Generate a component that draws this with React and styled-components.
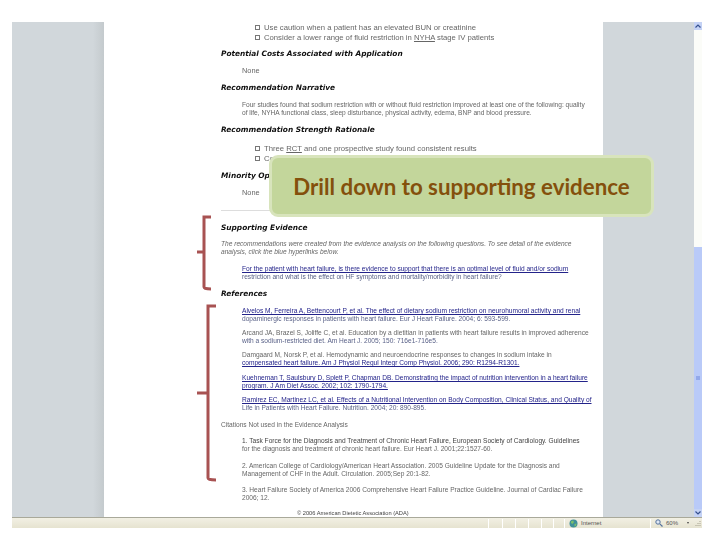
import React from "react";
import styled, { createGlobalStyle } from "styled-components";

const Global = createGlobalStyle`
  html, body { margin: 0; background: #fff; }
  body { width: 720px; height: 540px; overflow: hidden; font-family: "Liberation Sans", Arial, sans-serif; }
`;
const Stage = styled.div`
  position: relative; width: 720px; height: 540px; box-sizing: border-box; padding: 22px 18px 12px 12px;
`;
const Browser = styled.div`
  display: flex; flex-direction: column; height: 506px;
`;
const Viewport = styled.div`
  display: flex; height: 495px;
`;
const LeftMargin = styled.div`
  width: 92px; background: linear-gradient(90deg, #d1d7db 0, #d1d7db 88%, #c4cacd 100%);
`;
const RightMargin = styled.div`
  width: 91px; background: #d1d7db;
`;
const Doc = styled.main`
  width: 499px; box-sizing: border-box; background: #fff; padding: 1px 0 0 117px; overflow: hidden;
  filter: blur(0.4px); color: #555;
`;
const Heading = styled.h3`
  margin: ${p => p.$top}px 0 0; font: italic bold 7.4px/10px "DejaVu Sans", sans-serif; color: #111; white-space: nowrap;
`;
const Body = styled.div`
  margin: ${p => p.$top || 0}px 0 0 ${p => p.$indent ?? 21}px;
  font-size: ${p => p.$size || 6.6}px; line-height: 8px; white-space: nowrap; color: #666;
  font-style: ${p => p.$italic ? "italic" : "normal"};
`;
const Item = styled.div`
  display: flex; align-items: center; gap: 4px; height: 8px;
  margin: ${p => p.$top || 0}px 0 0 34px;
  font-size: 7.7px; white-space: nowrap; color: #666;
`;
const Box = styled.span`
  width: 5px; height: 5px; border: 1px solid #777; box-sizing: border-box;
`;
const Rule = styled.hr`
  margin: 13px 0 0; height: 1px; width: 370px; border: 0; background: #ddd;
`;
const Line = styled.div`
  color: ${p => p.$link ? "#23238a" : p.$blue ? "#5a6288" : p.$dark ? "#444" : "#666"};
  text-decoration: ${p => p.$link ? "underline" : "none"};
`;
const Foot = styled.div`
  margin: 7px 0 0 76px; font-size: 5.7px; line-height: 8px; color: #444; white-space: nowrap;
`;

const Scroll = styled.div`
  width: 8px; display: flex; flex-direction: column; background: #fbfcf8;
`;
const ScrollBtn = styled.div`
  height: 8px; background: #c4d2f5; display: flex; align-items: center; justify-content: center;
`;
const Track = styled.div`
  flex: 1; display: flex; flex-direction: column;
`;
const TrackGap = styled.div`
  height: 217px;
`;
const Thumb = styled.div`
  flex: 1; background: #b9caf8; display: flex; align-items: center; justify-content: center;
`;
const Grip = styled.span`
  width: 4px; height: 4px; background: #93a9ea;
`;
const Status = styled.footer`
  height: 11px; display: flex; align-items: center; box-sizing: border-box;
  border-top: 1px solid #a9a99a; background: linear-gradient(#f2f0e4, #e6e3d0);
  font-size: 6px; color: #555;
`;
const Spacer = styled.div`
  width: 476px;
`;
const Cell = styled.div`
  width: ${p => p.$w}px; height: 9px; box-sizing: border-box; border-left: 1px solid #fff;
  display: flex; align-items: center; gap: ${p => p.$gap || 0}px; padding-left: ${p => p.$pad || 0}px; white-space: nowrap;
`;
const Caret = styled.span`
  margin-left: 6px; width: 0; height: 0; border: 1.5px solid transparent; border-top: 2px solid #444; border-bottom: 0;
`;
const Resize = styled.svg`
  margin-left: 3px;
`;

const Brackets = styled.svg`
  position: absolute; left: 190px; top: 210px;
`;
const Callout = styled.div`
  position: absolute; left: 269px; top: 155px; width: 385px; height: 62px; box-sizing: border-box;
  display: flex; align-items: center; justify-content: center;
  background: #c3d69b; border: 3px solid #d8e4bc; border-radius: 9px;
  color: #84500c; font: bold 22.3px "Lato", sans-serif; white-space: nowrap;
`;

const refs = [
  [["Alvelos M, Ferreira A, Bettencourt P, et al. The effect of dietary sodium restriction on neurohumoral activity and renal", "link"], ["dopaminergic responses in patients with heart failure. Eur J Heart Failure. 2004; 6: 593-599.", "blue"]],
  [["Arcand JA, Brazel S, Joliffe C, et al. Education by a dietitian in patients with heart failure results in improved adherence", ""], ["with a sodium-restricted diet. Am Heart J. 2005; 150: 716e1-716e5.", "blue"]],
  [["Damgaard M, Norsk P, et al. Hemodynamic and neuroendocrine responses to changes in sodium intake in", ""], ["compensated heart failure. Am J Physiol Regul Integr Comp Physiol. 2006; 290: R1294-R1301.", "link"]],
  [["Kuehneman T, Saulsbury D, Splett P, Chapman DB. Demonstrating the impact of nutrition intervention in a heart failure", "link"], ["program. J Am Diet Assoc. 2002; 102: 1790-1794.", "link"]],
  [["Ramirez EC, Martinez LC, et al. Effects of a Nutritional Intervention on Body Composition, Clinical Status, and Quality of", "link"], ["Life in Patients with Heart Failure. Nutrition. 2004; 20: 890-895.", "blue"]],
];
const refTops = [8, 6, 6, 7, 6];

const notes = [
  [8, ["1. Task Force for the Diagnosis and Treatment of Chronic Heart Failure, European Society of Cardiology. Guidelines", "for the diagnosis and treatment of chronic heart failure. Eur Heart J. 2001;22:1527-60."]],
  [9, ["2. American College of Cardiology/American Heart Association. 2005 Guideline Update for the Diagnosis and", "Management of CHF in the Adult. Circulation. 2005;Sep 20:1-82."]],
  [8, ["3. Heart Failure Society of America 2006 Comprehensive Heart Failure Practice Guideline. Journal of Cardiac Failure", "2006; 12."]],
];

const Globe = () => (
  <svg width="9" height="9" viewBox="0 0 9 9">
    <circle cx="4.5" cy="4.5" r="4" fill="#3f8f9a" />
    <path d="M2 2.5 4 1.5 5 3 3.5 5 2 4zM5.5 5 7.5 4.5 7 7 5.5 7.5z" fill="#7cc06a" />
  </svg>
);
const Zoom = () => (
  <svg width="8" height="8" viewBox="0 0 8 8">
    <circle cx="3" cy="3" r="2.2" fill="#dfe8f5" stroke="#55729c" />
    <path d="M4.8 4.8 7.5 7.5" stroke="#55729c" strokeWidth="1.2" />
  </svg>
);

export default function App() {
  return (
    <Stage>
      <Global />
      <Browser>
        <Viewport>
          <LeftMargin />
          <Doc>
            <Item><Box /><span>Use caution when a patient has an elevated BUN or creatinine</span></Item>
            <Item $top={2}><Box /><span>Consider a lower range of fluid restriction in <u>NYHA</u> stage IV patients</span></Item>
            <Heading $top={8}>Potential Costs Associated with Application</Heading>
            <Body $top={8} $size={7.4}>None</Body>
            <Heading $top={8}>Recommendation Narrative</Heading>
            <Body $top={8}>
              <Line>Four studies found that sodium restriction with or without fluid restriction improved at least one of the following: quality</Line>
              <Line>of life, NYHA functional class, sleep disturbance, physical activity, edema, BNP and blood pressure.</Line>
            </Body>
            <Heading $top={8}>Recommendation Strength Rationale</Heading>
            <Item $top={9}><Box /><span>Three <u>RCT</u> and one prospective study found consistent results</span></Item>
            <Item $top={2}><Box /><span>Consistent</span></Item>
            <Heading $top={9}>Minority Opinions</Heading>
            <Body $top={8} $size={7.4}>None</Body>
            <Rule />
            <Heading $top={12}>Supporting Evidence</Heading>
            <Body $top={7} $indent={0} $italic>
              <Line>The recommendations were created from the evidence analysis on the following questions. To see detail of the evidence</Line>
              <Line>analysis, click the blue hyperlinks below.</Line>
            </Body>
            <Body $top={9}>
              <Line $link>For the patient with heart failure, is there evidence to support that there is an optimal level of fluid and/or sodium</Line>
              <Line $blue>restriction and what is the effect on HF symptoms and mortality/morbidity in heart failure?</Line>
            </Body>
            <Heading $top={8}>References</Heading>
            {refs.map((r, i) => (
              <Body key={i} $top={refTops[i]}>
                {r.map(([t, k]) => <Line key={t} $link={k === "link"} $blue={k === "blue"}>{t}</Line>)}
              </Body>
            ))}
            <Body $top={9} $indent={0}>Citations Not used in the Evidence Analysis</Body>
            {notes.map(([top, ls], n) => (
              <Body key={ls[0]} $top={top}>
                {ls.map((t, j) => <Line key={t} $dark={n === 0 && j === 0}>{t}</Line>)}
              </Body>
            ))}
            <Foot>© 2006 American Dietetic Association (ADA)</Foot>
          </Doc>
          <RightMargin />
          <Scroll>
            <ScrollBtn>
              <svg width="6" height="4" viewBox="0 0 6 4"><path d="M0.5 3.5 3 1 5.5 3.5" fill="none" stroke="#35508f" strokeWidth="1.2" /></svg>
            </ScrollBtn>
            <Track>
              <TrackGap />
              <Thumb><Grip /></Thumb>
            </Track>
            <ScrollBtn>
              <svg width="6" height="4" viewBox="0 0 6 4"><path d="M0.5 0.5 3 3 5.5 0.5" fill="none" stroke="#35508f" strokeWidth="1.2" /></svg>
            </ScrollBtn>
          </Scroll>
        </Viewport>
        <Status>
          <Spacer />
          <Cell $w={14} /><Cell $w={13} /><Cell $w={13} /><Cell $w={13} /><Cell $w={12} /><Cell $w={11} />
          <Cell $w={86} $gap={3} $pad={4}><Globe />Internet</Cell>
          <Cell $w={52} $gap={3} $pad={4}>
            <Zoom />60%<Caret />
            <Resize width="6" height="6" viewBox="0 0 6 6"><path d="M5 1v1M3 3v1M5 3v1M1 5v1M3 5v1M5 5v1" stroke="#a5a28f" /></Resize>
          </Cell>
        </Status>
      </Browser>
      <Brackets width="32" height="300" viewBox="0 0 32 300">
        <path d="M21 7H14V77Q14 79 21 79M14 42H7M26 96H18V268Q18 270 26 270M18 183H7" fill="none" stroke="#a85252" strokeWidth="3" />
      </Brackets>
      <Callout>Drill down to supporting evidence</Callout>
    </Stage>
  );
}
